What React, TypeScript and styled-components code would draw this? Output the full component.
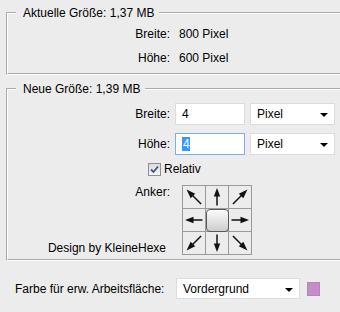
import React from 'react';
import styled, { createGlobalStyle } from 'styled-components';

const GlobalStyle = createGlobalStyle`
  html, body {
    margin: 0;
    padding: 0;
    background: #ececec;
  }
  body {
    font-family: 'Liberation Sans', Arial, sans-serif;
    font-size: 12px;
    color: #000;
    overflow: hidden;
  }
`;

const Page = styled.div`
  width: 340px;
  height: 312px;
  padding: 6px 0 0 6px;
  box-sizing: border-box;
  overflow: hidden;
`;

const Group = styled.fieldset<{ $pb: number; $mt?: number }>`
  margin: ${(p) => p.$mt ?? 0}px -20px 0 0;
  padding: 0 0 ${(p) => p.$pb}px 0;
  border: 2px groove #fff;
  min-width: 0;
`;

const Legend = styled.legend`
  margin-left: 8px;
  padding: 0 5px 0 7px;
  line-height: 14px;
`;

const InfoGrid = styled.div`
  display: grid;
  grid-template-columns: 162px auto;
  grid-auto-rows: 24px;
  column-gap: 9px;
  align-items: center;
  padding-top: 2px;
`;

const Label = styled.span`
  text-align: right;
`;

const FormRow = styled.div<{ $mt: number }>`
  display: flex;
  align-items: center;
  gap: 5px;
  margin-top: ${(p) => p.$mt}px;
`;

const FieldLabel = styled.span`
  flex: none;
  width: 162px;
  text-align: right;
`;

const TextBox = styled.div<{ $focused?: boolean }>`
  width: 70px;
  height: 22px;
  box-sizing: border-box;
  display: flex;
  align-items: center;
  padding-left: 6px;
  background: #fff;
  border: 1px solid ${(p) => (p.$focused ? '#7eb2e6' : '#dcdcdc')};
`;

const Selected = styled.span`
  background: #3399ff;
  color: #fff;
  padding: 0 0 0 1px;
  line-height: 14px;
`;

const Select = styled.div<{ $w: number; $h?: number }>`
  position: relative;
  flex: none;
  width: ${(p) => p.$w}px;
  height: ${(p) => p.$h ?? 22}px;
  box-sizing: border-box;
  display: flex;
  align-items: center;
  padding-left: 6px;
  background: #fff;
  border: 1px solid #dcdcdc;

  &::after {
    content: '';
    position: absolute;
    right: 6px;
    top: 50%;
    margin-top: -1px;
    border-left: 4px solid transparent;
    border-right: 4px solid transparent;
    border-top: 4px solid #000;
  }
`;

const CheckRow = styled.label`
  display: flex;
  align-items: center;
  gap: 3px;
  height: 16px;
  margin-top: 6px;
  padding-left: 140px;
`;

const CheckBox = styled.span`
  width: 13px;
  height: 13px;
  box-sizing: border-box;
  border: 1px solid #8e8f8f;
  background: linear-gradient(#dcdcdc, #f6f6f6);
  display: flex;
  align-items: center;
  justify-content: center;
`;

const AnchorRow = styled.div`
  display: grid;
  grid-template-columns: 162px 70px;
  column-gap: 12px;
  margin-top: 8px;
`;

const AnchorSide = styled.div`
  display: flex;
  flex-direction: column;
  justify-content: space-between;
  align-items: flex-end;
  line-height: 14px;
`;

const Credit = styled.span`
  padding-right: 4px;
`;

const AnchorGrid = styled.div`
  display: grid;
  grid-template-columns: repeat(3, 22px);
  grid-template-rows: repeat(3, 22px);
  gap: 1px;
  padding: 1px;
  width: 70px;
  height: 70px;
  box-sizing: border-box;
  background: #9a9a9a;
`;

const AnchorCell = styled.div`
  background: #ececec;
  display: flex;
  align-items: center;
  justify-content: center;
`;

const CenterKnob = styled.div`
  flex: none;
  width: 23px;
  height: 23px;
  box-sizing: border-box;
  border: 1px solid #5a5a5a;
  border-radius: 4px;
  background: linear-gradient(#fbfbfb, #cdcdcd);
`;

const BottomRow = styled.div`
  display: flex;
  align-items: center;
  margin-top: 17px;
  padding-left: 9px;
`;

const BottomLabel = styled.span`
  flex: none;
  width: 161px;
`;

const Swatch = styled.div<{ $color: string }>`
  width: 13px;
  height: 14px;
  margin-left: 7px;
  box-sizing: border-box;
  background: ${(p) => p.$color};
  border: 1px solid #b585b8;
`;

function Arrow({ angle }: { angle: number }) {
  const diag = angle % 90 !== 0;
  return (
    <svg width="22" height="22" viewBox="0 0 22 22">
      <g transform={`rotate(${angle} 11 11)`}>
        <line x1="11" y1="9" x2="11" y2={diag ? 21 : 19.5} stroke="#111" strokeWidth="1.5" />
        <polygon points={diag ? '11,0.5 7.8,9.5 14.2,9.5' : '11,2 7.8,10.5 14.2,10.5'} fill="#111" />
      </g>
    </svg>
  );
}

const anchors: (number | null)[] = [-45, 0, 45, -90, null, 90, -135, 180, 135];

export default function App() {
  return (
    <>
      <GlobalStyle />
      <Page>
        <Group $pb={3}>
          <Legend>Aktuelle Größe: 1,37 MB</Legend>
          <InfoGrid>
            <Label>Breite:</Label>
            <span>800 Pixel</span>
            <Label>Höhe:</Label>
            <span>600 Pixel</span>
          </InfoGrid>
        </Group>

        <Group $pb={4} $mt={7}>
          <Legend>Neue Größe: 1,39 MB</Legend>
          <FormRow $mt={7}>
            <FieldLabel>Breite:</FieldLabel>
            <TextBox>4</TextBox>
            <Select $w={85}>Pixel</Select>
          </FormRow>
          <FormRow $mt={8}>
            <FieldLabel>Höhe:</FieldLabel>
            <TextBox $focused>
              <Selected>4</Selected>
            </TextBox>
            <Select $w={85}>Pixel</Select>
          </FormRow>
          <CheckRow>
            <CheckBox>
              <svg width="9" height="9" viewBox="0 0 9 9">
                <path d="M1 4.5 L3.5 7 L8 1.5" fill="none" stroke="#3d5590" strokeWidth="1.8" />
              </svg>
            </CheckBox>
            Relativ
          </CheckRow>
          <AnchorRow>
            <AnchorSide>
              <span>Anker:</span>
              <Credit>Design by KleineHexe</Credit>
            </AnchorSide>
            <AnchorGrid>
              {anchors.map((a, i) => (
                <AnchorCell key={i}>{a === null ? <CenterKnob /> : <Arrow angle={a} />}</AnchorCell>
              ))}
            </AnchorGrid>
          </AnchorRow>
        </Group>

        <BottomRow>
          <BottomLabel>Farbe für erw. Arbeitsfläche:</BottomLabel>
          <Select $w={124} $h={21}>Vordergrund</Select>
          <Swatch $color="#c68ec9" />
        </BottomRow>
      </Page>
    </>
  );
}
